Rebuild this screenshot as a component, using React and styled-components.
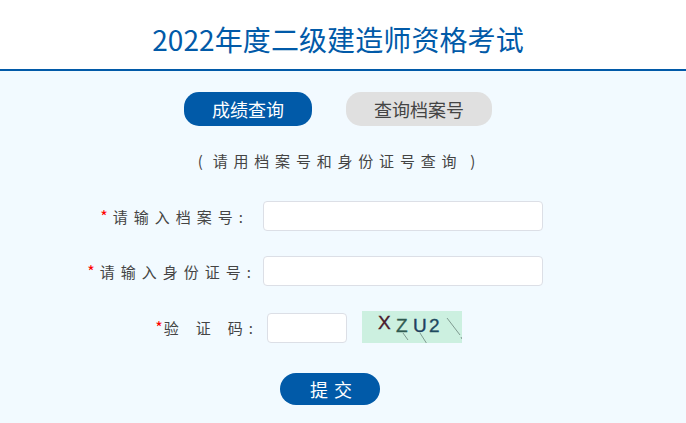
import React from "react";
import styled, { createGlobalStyle } from "styled-components";

const Global = createGlobalStyle`
  html, body { margin: 0; padding: 0; background: #f2faff; }
  body { font-family: "Noto Sans CJK SC", "Liberation Sans", sans-serif; }
  * { box-sizing: border-box; }
`;
const Page = styled.div`
  width: 686px;
  height: 423px;
  overflow: hidden;
  background: #f2faff;
`;
const Header = styled.header`
  height: 71px;
  background: #fff;
  border-bottom: 2px solid #015aa8;
  display: flex;
  justify-content: center;
  padding: 18px 10px 0 0;
`;
const Title = styled.h1`
  margin: 0;
  font-size: 28px;
  line-height: 42px;
  font-weight: 400;
  letter-spacing: 0.1px;
  color: #015aa8;
  white-space: nowrap;
`;
const Tabs = styled.nav`
  display: flex;
  justify-content: center;
  gap: 34px;
  padding: 21px 10px 0 0;
`;
const Tab = styled.div`
  width: ${(p) => p.$width}px;
  height: 34px;
  border-radius: 15px;
  display: flex;
  align-items: center;
  justify-content: center;
  font-size: 18px;
  background: ${(p) => (p.$active ? "#015aa8" : "#e0e0e0")};
  color: ${(p) => (p.$active ? "#fff" : "#444")};
`;
const Hint = styled.p`
  margin: 24px 0 0;
  padding-right: 7px;
  height: 22px;
  line-height: 22px;
  text-align: center;
  font-size: 15px;
  letter-spacing: 5.8px;
  color: #444;
  white-space: pre;
`;
const Paren = styled.span`
  margin: ${(p) => (p.$open ? "0 4px 0 0" : "0 0 0 8px")};
`;
const Form = styled.form`
  display: flex;
  flex-direction: column;
  margin-top: 29px;
`;
const Row = styled.div`
  display: flex;
  align-items: flex-end;
  height: ${(p) => p.$height}px;
  margin-top: ${(p) => p.$top || 0}px;
`;
const Label = styled.label`
  width: ${(p) => p.$width}px;
  flex: none;
  align-self: center;
  text-align: right;
  font-size: 15px;
  letter-spacing: ${(p) => p.$spacing}px;
  color: #444;
  white-space: pre;
`;
const Star = styled.span`
  color: #f00;
  font-size: 16px;
  letter-spacing: ${(p) => p.$spacing || 0}px;
`;
const Colon = styled.span`
  margin-left: ${(p) => p.$left || 0}px;
`;
const Field = styled.input`
  width: ${(p) => p.$width}px;
  height: 30px;
  margin-left: ${(p) => p.$left}px;
  border: 1px solid #dcdfe6;
  border-radius: 4px;
  background: #fff;
  flex: none;
`;
const Captcha = styled.svg`
  display: block;
  width: 100px;
  height: 32px;
  margin-left: 15px;
  flex: none;
`;
const CaptchaText = styled.text`
  font-family: "Liberation Sans", sans-serif;
  font-size: 19px;
  fill: ${(p) => p.$color};
  stroke: ${(p) => p.$color};
  stroke-width: 0.35px;
`;
const Submit = styled.button`
  display: block;
  width: 100px;
  height: 32px;
  margin: 30px 0 0 280px;
  padding: 0 0 0 8px;
  border: 0;
  border-radius: 16px;
  background: #015aa8;
  color: #fff;
  font-family: inherit;
  font-size: 18px;
  letter-spacing: 6px;
`;

export default function App() {
  return (
    <Page>
      <Global />
      <Header>
        <Title>2022年度二级建造师资格考试</Title>
      </Header>
      <Tabs>
        <Tab $active $width={128}>成绩查询</Tab>
        <Tab $width={146}>查询档案号</Tab>
      </Tabs>
      <Hint><Paren $open>(</Paren>请用档案号和身份证号查询<Paren>)</Paren></Hint>
      <Form>
        <Row $height={30}>
          <Label $width={249} $spacing={6}><Star $spacing={5}>*</Star>请输入档案号:</Label>
          <Field $width={280} $left={14} />
        </Row>
        <Row $height={30} $top={25}>
          <Label $width={257} $spacing={6}><Star $spacing={5}>*</Star>请输入身份证号:</Label>
          <Field $width={280} $left={6} />
        </Row>
        <Row $height={32} $top={25}>
          <Label $width={254} $spacing={1}><Star $spacing={1}>*</Star>验　证　码<Colon $left={5}>:</Colon></Label>
          <Field $width={80} $left={13} />
          <Captcha viewBox="0 0 100 32">
            <rect width="100" height="32" fill="#ccf0e0" />
            <g stroke="#7f9a90" strokeWidth="1" fill="none">
              <path d="M41 22 L46 29" />
              <path d="M58 22 L65 33" />
              <path d="M85 7 L98 24" />
              <path d="M99 26 L100 28" />
            </g>
            <CaptchaText x="16" y="18" $color="#4a1a2c">X</CaptchaText>
            <CaptchaText x="34" y="21" $color="#2f5a50">Z</CaptchaText>
            <CaptchaText x="51" y="21" $color="#22405e">U</CaptchaText>
            <CaptchaText x="67" y="21" $color="#1f4a60">2</CaptchaText>
          </Captcha>
        </Row>
        <Submit type="button">提交</Submit>
      </Form>
    </Page>
  );
}
